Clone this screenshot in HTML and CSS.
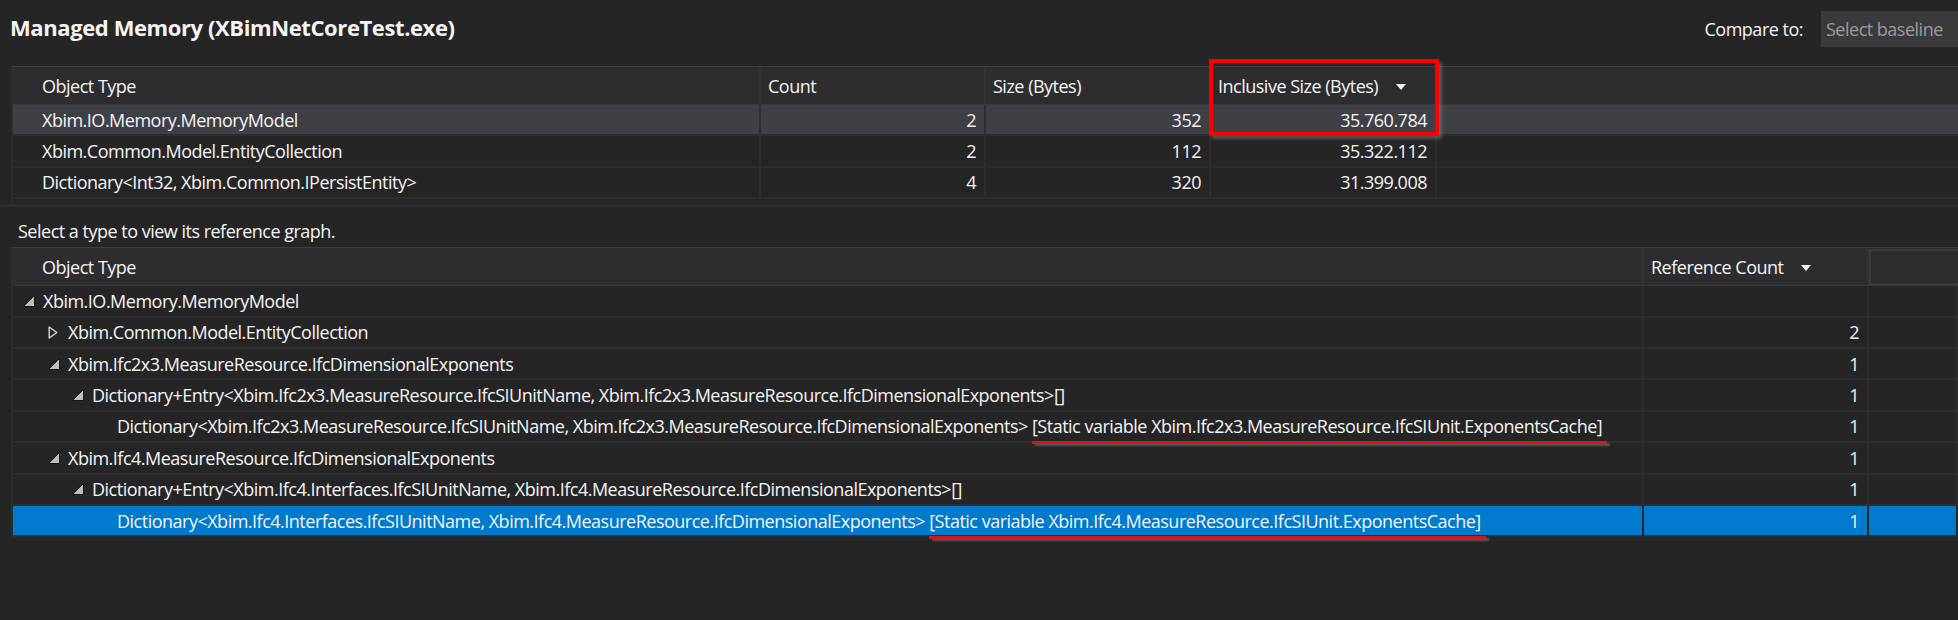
FILE: index.html
```html
<!DOCTYPE html>
<html>
<head>
<meta charset="utf-8">
<link rel="stylesheet" href="styles.css">
</head>
<body>
<div class="page">
  <header class="topbar">
    <h1 class="title">Managed Memory (XBimNetCoreTest.exe)</h1>
    <div class="compare">
      <span class="compare-label">Compare to:</span>
      <div class="select">Select baseline</div>
    </div>
  </header>

  <div class="grid g1">
    <div class="row head">
      <div class="cell c-name">Object Type</div>
      <div class="cell">Count</div>
      <div class="cell">Size (Bytes)</div>
      <div class="cell sorted">Inclusive Size (Bytes)<svg class="sort" width="10" height="6" viewBox="0 0 10 6"><path d="M0 0H10L5 6Z" fill="#f1f1f1"/></svg></div>
      <div class="cell last"></div>
    </div>
    <div class="row hl">
      <div class="cell c-name">Xbim.IO.Memory.MemoryModel</div>
      <div class="cell num">2</div>
      <div class="cell num">352</div>
      <div class="cell num">35.760.784</div>
      <div class="cell last"></div>
    </div>
    <div class="row">
      <div class="cell c-name">Xbim.Common.Model.EntityCollection</div>
      <div class="cell num">2</div>
      <div class="cell num">112</div>
      <div class="cell num">35.322.112</div>
      <div class="cell last"></div>
    </div>
    <div class="row">
      <div class="cell c-name">Dictionary&lt;Int32, Xbim.Common.IPersistEntity&gt;</div>
      <div class="cell num">4</div>
      <div class="cell num">320</div>
      <div class="cell num">31.399.008</div>
      <div class="cell last"></div>
    </div>
    <div class="redbox"></div>
  </div>

  <div class="splitter"></div>
  <div class="hint">Select a type to view its reference graph.</div>

  <div class="grid g2">
    <div class="row head">
      <div class="cell c-name">Object Type</div>
      <div class="cell">Reference Count<svg class="sort" width="10" height="6" viewBox="0 0 10 6"><path d="M0 0H10L5 6Z" fill="#f1f1f1"/></svg></div>
      <div class="cell extra"></div>
    </div>
    <div class="row">
      <div class="cell tree l0"><span class="tw"><svg width="12" height="12" viewBox="0 0 12 12"><path d="M11.5 0.5V11.5H0.5Z" fill="#bdbdbd" stroke="#151515"/></svg></span>Xbim.IO.Memory.MemoryModel</div>
      <div class="cell num"></div>
      <div class="cell"></div>
    </div>
    <div class="row">
      <div class="cell tree l1"><span class="tw"><svg width="10" height="13" viewBox="0 0 10 13"><path d="M1.2 1L8.8 6.5L1.2 12Z" fill="none" stroke="#d6d6d6" stroke-width="1.4" stroke-linejoin="round"/></svg></span>Xbim.Common.Model.EntityCollection</div>
      <div class="cell num">2</div>
      <div class="cell"></div>
    </div>
    <div class="row">
      <div class="cell tree l1"><span class="tw"><svg width="12" height="12" viewBox="0 0 12 12"><path d="M11.5 0.5V11.5H0.5Z" fill="#bdbdbd" stroke="#151515"/></svg></span>Xbim.Ifc2x3.MeasureResource.IfcDimensionalExponents</div>
      <div class="cell num">1</div>
      <div class="cell"></div>
    </div>
    <div class="row">
      <div class="cell tree l2"><span class="tw"><svg width="12" height="12" viewBox="0 0 12 12"><path d="M11.5 0.5V11.5H0.5Z" fill="#bdbdbd" stroke="#151515"/></svg></span>Dictionary+Entry&lt;Xbim.Ifc2x3.MeasureResource.IfcSIUnitName, Xbim.Ifc2x3.MeasureResource.IfcDimensionalExponents&gt;[]</div>
      <div class="cell num">1</div>
      <div class="cell"></div>
    </div>
    <div class="row">
      <div class="cell tree l3"><span class="tw"></span>Dictionary&lt;Xbim.Ifc2x3.MeasureResource.IfcSIUnitName, Xbim.Ifc2x3.MeasureResource.IfcDimensionalExponents&gt;&nbsp;<span class="mark">[Static variable Xbim.Ifc2x3.MeasureResource.IfcSIUnit.ExponentsCache]</span></div>
      <div class="cell num">1</div>
      <div class="cell"></div>
    </div>
    <div class="row">
      <div class="cell tree l1"><span class="tw"><svg width="12" height="12" viewBox="0 0 12 12"><path d="M11.5 0.5V11.5H0.5Z" fill="#bdbdbd" stroke="#151515"/></svg></span>Xbim.Ifc4.MeasureResource.IfcDimensionalExponents</div>
      <div class="cell num">1</div>
      <div class="cell"></div>
    </div>
    <div class="row">
      <div class="cell tree l2"><span class="tw"><svg width="12" height="12" viewBox="0 0 12 12"><path d="M11.5 0.5V11.5H0.5Z" fill="#bdbdbd" stroke="#151515"/></svg></span>Dictionary+Entry&lt;Xbim.Ifc4.Interfaces.IfcSIUnitName, Xbim.Ifc4.MeasureResource.IfcDimensionalExponents&gt;[]</div>
      <div class="cell num">1</div>
      <div class="cell"></div>
    </div>
    <div class="row sel">
      <div class="cell tree l3"><span class="tw"></span>Dictionary&lt;Xbim.Ifc4.Interfaces.IfcSIUnitName, Xbim.Ifc4.MeasureResource.IfcDimensionalExponents&gt;&nbsp;<span class="mark">[Static variable Xbim.Ifc4.MeasureResource.IfcSIUnit.ExponentsCache]</span></div>
      <div class="cell num">1</div>
      <div class="cell"></div>
    </div>
  </div>
</div>
</body>
</html>
```

FILE: styles.css
```css
html, body {
  margin: 0;
  padding: 0;
  background: #252526;
  overflow: hidden;
}
body {
  width: 1958px;
  height: 620px;
  font-family: "Open Sans", "Noto Sans", "DejaVu Sans", sans-serif;
  font-size: 18px;
  letter-spacing: -0.5px;
  color: #f4f4f4;
}
.page {
  display: flex;
  flex-direction: column;
}
.topbar {
  height: 58px;
  margin-bottom: 8px;
  display: flex;
  align-items: center;
  justify-content: space-between;
}
.title {
  margin: 0 0 4px 10px;
  font-size: 22px;
  font-weight: 700;
  letter-spacing: -0.4px;
  color: #f4f4f4;
}
.compare {
  display: flex;
  align-items: center;
  gap: 18px;
  margin-right: -10px;
}
.select {
  width: 147px;
  height: 36px;
  box-sizing: border-box;
  padding-left: 5px;
  display: flex;
  align-items: center;
  background: #3a3a3d;
  color: #9a9a9a;
  white-space: nowrap;
  overflow: hidden;
}

.grid {
  position: relative;
  margin-left: 11px;
  border-left: 2px solid #2d2d30;
  border-top: 1px solid #3f3f46;
}
.row {
  display: grid;
  height: 31.4px;
  box-sizing: border-box;
  border-bottom: 2px solid #2d2d30;
}
.row.head {
  height: 38px;
  background: #2d2d30;
  border-bottom: 1px solid #3a3a3e;
}
.g1 .row {
  grid-template-columns: 748px 225px 225px 226px 1fr;
}
.g1 {
  padding-bottom: 3px;
}
.g2 .row {
  grid-template-columns: 1631px 225px 1fr;
}
.cell {
  display: flex;
  align-items: center;
  box-sizing: border-box;
  padding: 0 7px;
  border-right: 2px solid #2d2d30;
  white-space: nowrap;
  min-width: 0;
}
.head .cell {
  border-right: 2px solid #333337;
}
.cell.last {
  border-right: none;
}
.cell.c-name {
  padding-left: 29px;
}
.cell.num {
  justify-content: flex-end;
  padding-right: 8px;
}
.sort {
  margin-left: 18px;
  margin-top: 3px;
  flex: none;
}
.row.hl {
  background: #3f3f46;
}
.row.hl .cell {
  border-right-color: #2f2f33;
}
.row.sel {
  background: #007acc;
}
.row.sel .cell {
  border-right-color: #252526;
}
.head .cell.extra {
  border: 2px solid #3a3a3e;
  border-right: none;
  margin-top: 1px;
  background: #2d2d30;
}

.tree {
  padding-left: 8px;
}
.tree.l1 { padding-left: 33px; }
.tree.l2 { padding-left: 57px; }
.tree.l3 { padding-left: 82px; }
.tw {
  width: 22px;
  flex: none;
  display: flex;
  align-items: center;
}
.tw svg {
  margin-left: 2px;
}

.mark {
  position: relative;
}
.mark::after {
  content: "";
  position: absolute;
  left: 0;
  right: -5px;
  bottom: -6px;
  height: 3px;
  background: #d8141a;
  box-shadow: 3px 2px 2px rgba(150, 150, 150, 0.45);
}

.redbox {
  position: absolute;
  left: 1196px;
  top: -8px;
  width: 230px;
  height: 77px;
  box-sizing: border-box;
  border: 4px solid #ff0000;
  box-shadow: 3px 3px 3px rgba(170, 170, 170, 0.35);
}

.splitter {
  height: 3px;
  background: #2d2d30;
  margin-top: 2px;
}
.hint {
  height: 40px;
  box-sizing: border-box;
  padding: 7px 0 0 18px;
  display: flex;
  align-items: center;
}
```
